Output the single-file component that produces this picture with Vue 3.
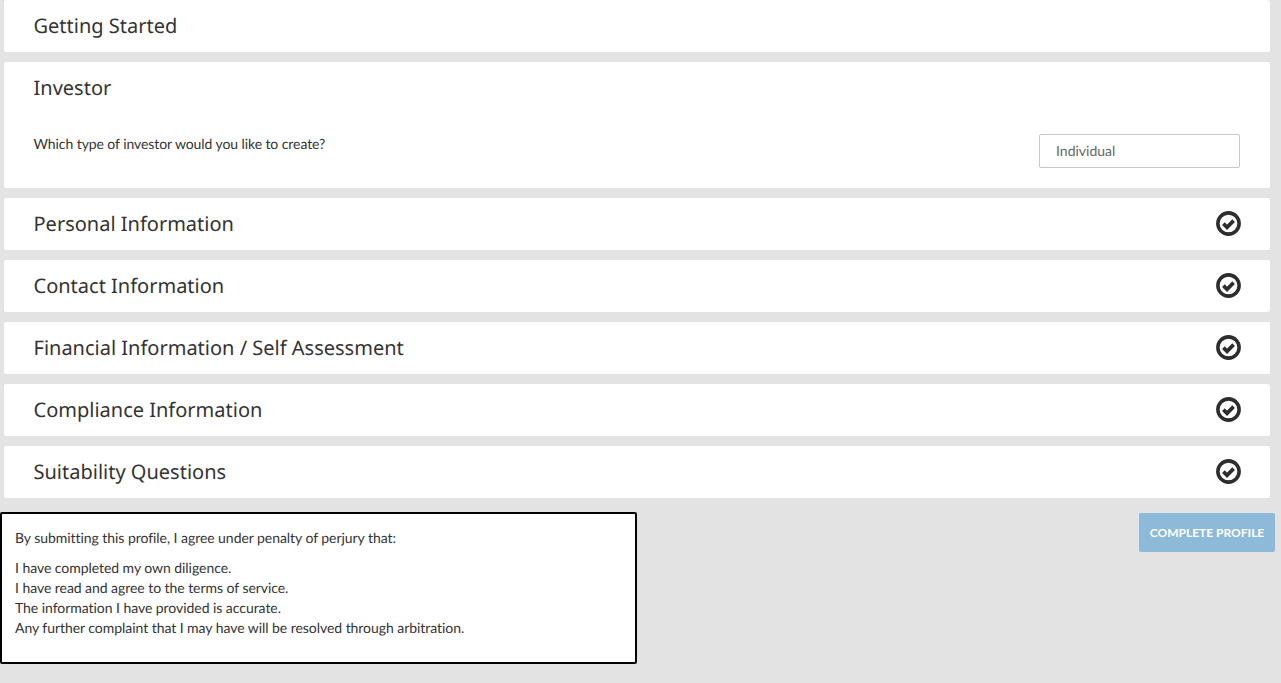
<template>
  <div class="page">
    <section class="card">
      <h2 class="card-head">Getting Started</h2>
    </section>

    <section class="card">
      <h2 class="card-head">Investor</h2>
      <div class="investor-body">
        <p class="question">Which type of investor would you like to create?</p>
        <div class="select-box">Individual</div>
      </div>
    </section>

    <section v-for="title in steps" :key="title" class="card">
      <div class="card-head">
        <h2>{{ title }}</h2>
        <svg class="check" viewBox="0 0 24 24" width="25" height="25" aria-hidden="true">
          <circle cx="12" cy="12" r="10.2" fill="none" stroke="#2d2d2d" stroke-width="3.4" />
          <path d="M7.1 12.1l3.5 3.5 6.3-6.3" fill="none" stroke="#2d2d2d" stroke-width="3.6" />
        </svg>
      </div>
    </section>

    <div class="footer-row">
      <div class="terms">
        <p class="terms-lead">By submitting this profile, I agree under penalty of perjury that:</p>
        <p v-for="line in terms" :key="line">{{ line }}</p>
      </div>
      <button class="complete-btn" type="button">COMPLETE PROFILE</button>
    </div>
  </div>
</template>

<script setup>
const steps = [
  'Personal Information',
  'Contact Information',
  'Financial Information / Self Assessment',
  'Compliance Information',
  'Suitability Questions'
];

const terms = [
  'I have completed my own diligence.',
  'I have read and agree to the terms of service.',
  'The information I have provided is accurate.',
  'Any further complaint that I may have will be resolved through arbitration.'
];
</script>

<style>
html,
body {
  margin: 0;
  background: #e3e3e3;
}
</style>

<style scoped>
.page {
  height: 683px;
  overflow: hidden;
  background: #e3e3e3;
  font-family: Lato, "Liberation Sans", sans-serif;
  color: #333;
  text-rendering: geometricPrecision;
}

.card {
  margin: 0 11px 10px 4px;
  background: #fff;
  border-radius: 2px;
}

.card-head {
  display: flex;
  align-items: center;
  justify-content: space-between;
  height: 52px;
  margin: 0;
  padding: 0 29px 2px 29.5px;
  box-sizing: border-box;
  font-family: "Noto Sans", sans-serif;
  font-size: 20px;
  font-weight: 400;
  color: #333;
}

.card-head h2 {
  margin: 0;
  font: inherit;
  color: inherit;
}

.investor-body {
  display: flex;
  justify-content: space-between;
  align-items: flex-start;
  height: 74px;
  padding: 20px 30px 0 29.5px;
  box-sizing: border-box;
}

.question {
  margin: 0;
  font-size: 14px;
  line-height: 20px;
  letter-spacing: -0.08px;
  color: #333;
}

.select-box {
  width: 201px;
  height: 34px;
  padding-left: 16px;
  box-sizing: border-box;
  border: 1px solid #c8c8c8;
  border-radius: 2px;
  font-size: 14px;
  line-height: 32px;
  color: #666;
}

.check {
  display: block;
  margin-top: 1px;
}

.footer-row {
  display: flex;
  justify-content: space-between;
  align-items: flex-start;
  margin-top: 14px;
  padding-right: 6px;
}

.terms {
  width: 637px;
  height: 152px;
  padding: 14px 13px 0;
  box-sizing: border-box;
  background: #fff;
  border: 2px solid #000;
  border-radius: 2px;
  font-size: 14px;
  line-height: 20px;
  letter-spacing: -0.05px;
  color: #333;
}

.terms p {
  margin: 0;
}

.terms .terms-lead {
  margin-bottom: 10px;
}

.complete-btn {
  width: 136px;
  height: 39px;
  margin-top: 1px;
  padding: 0;
  border: none;
  border-radius: 2px;
  background: #8cbad8;
  color: #fff;
  font-family: Lato, "Liberation Sans", sans-serif;
  font-size: 12px;
  font-weight: 700;
}
</style>
